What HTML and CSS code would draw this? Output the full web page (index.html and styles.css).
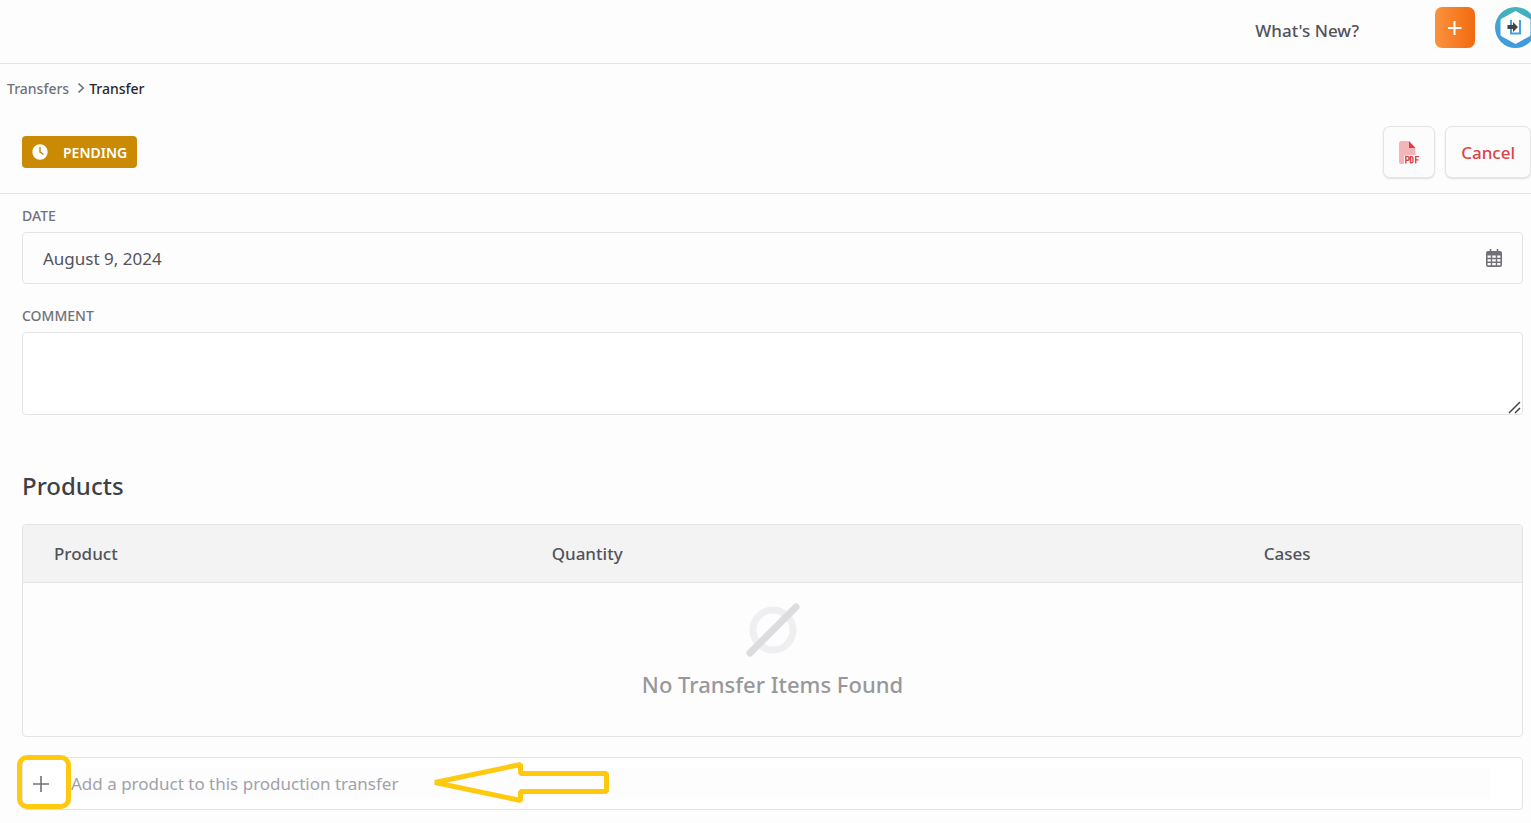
FILE: index.html
```html
<!DOCTYPE html>
<html lang="en">
<head>
  <meta charset="UTF-8" />
  <meta name="viewport" content="width=device-width, initial-scale=1.0" />
  <title>Transfer</title>
  <link rel="stylesheet" href="styles.css">
</head>
<body>
  <header class="topbar">
    <a class="whats-new" href="#">What's New?</a>
    <button class="create" type="button" aria-label="Create">
      <svg width="14" height="14" viewBox="0 0 14 14"><path d="M6.500 0v14M0 7h13.500" stroke="#fff" stroke-width="2" /></svg>
    </button>
    <a class="avatar" href="#" aria-label="Account">
      <svg width="41" height="41" viewBox="0 0 41 41">
        <defs>
          <linearGradient id="ring" x1="0" y1="0" x2="0" y2="1">
            <stop offset="0" stop-color="#42b5b5" />
            <stop offset="0.6" stop-color="#429fd9" />
            <stop offset="1" stop-color="#3f9ae0" />
          </linearGradient>
        </defs>
        <circle cx="20.500" cy="20.500" r="20.500" fill="url(#ring)" />
        <path d="M20.500 4.500l14.500 8v16l-14.500 8-14.500-8v-16z" fill="#fff" stroke="#fff" stroke-linejoin="round" />
        <path d="M16 13v13.500h9V13" fill="none" stroke="#45a3d6" stroke-width="2" />
        <path d="M12.500 18h5.500v-3l5 5-5 5v-3h-5.500z" fill="#444" />
      </svg>
    </a>
  </header>

  <nav class="breadcrumb" aria-label="Breadcrumb">
    <a href="#">Transfers</a>
    <svg width="8" height="12" viewBox="0 0 8 12"><path d="M1.500 1.500L6.200 6l-4.700 4.500" fill="none" stroke="#71717a" stroke-width="1.700" /></svg>
    <span>Transfer</span>
  </nav>

  <div class="toolbar">
    <span class="status">
      <svg width="16" height="16" viewBox="0 0 16 16"><circle cx="8" cy="8" r="7.700" fill="#fff" /><path d="M8 3.500V8l3 2" fill="none" stroke="#ca8a04" stroke-width="1.500" stroke-linecap="round" /></svg>
      PENDING
    </span>
    <div class="actions">
      <button class="btn btn-pdf" type="button" aria-label="Download PDF">
        <svg width="20" height="24" viewBox="0 0 20 24">
          <path d="M2.500 1H10v7h6.500v7H7q-2 0-2 2v7H2.500Q0 24 0 21.500v-18Q0 1 2.500 1z" fill="#f3b5b7" />
          <path d="M10 1l6.500 7H10z" fill="#dc3c42" />
          <path d="M6.800 23.500v-7h1.400a1.900 1.900 0 0 1 0 3.800H6.800M11.500 16.600v6.200h.9q1.600 0 1.600-1.600v-3q0-1.600-1.600-1.600zM16.700 23.500v-6.900h3.300M16.700 19.900h2.800" fill="none" stroke="#dc4248" stroke-width="1.400" />
        </svg>
      </button>
      <button class="btn" type="button">Cancel</button>
    </div>
  </div>

  <main class="content">
    <form class="details">
      <label for="date">DATE</label>
      <div class="date-field">
        <input id="date" type="text" value="August 9, 2024" />
        <svg width="16" height="18" viewBox="0 0 16 18">
          <path d="M4.500 0v3M11.500 0v3" stroke="#71717a" stroke-width="1.600" />
          <rect y="2" width="16" height="16" rx="2" fill="#71717a" />
          <path d="M1.600 6.500h3.200v2.200H1.600zM6.200 6.500h3.600v2.200H6.200zM11.200 6.500h3.200v2.200h-3.200zM1.600 10.200h3.200v2.300H1.600zM6.200 10.200h3.600v2.300H6.200zM11.200 10.200h3.200v2.300h-3.200zM1.600 14h3.200v2.300H1.600zM6.200 14h3.600v2.300H6.200zM11.200 14h3.200v2.300h-3.200z" fill="#fff" />
        </svg>
      </div>
      <label for="comment">COMMENT</label>
      <div class="comment-field">
        <textarea id="comment"></textarea>
        <svg class="grip" width="13" height="13" viewBox="0 0 13 13"><path d="M1 12L12 1M7 12l5-5" stroke="#444" stroke-width="1.500" /></svg>
      </div>
    </form>

    <h2>Products</h2>
    <div class="table-wrap">
      <table>
        <thead>
          <tr>
            <th class="col-product">Product</th>
            <th class="col-quantity">Quantity</th>
            <th class="col-cases">Cases</th>
          </tr>
        </thead>
        <tbody>
          <tr>
            <td class="empty" colspan="3">
              <svg width="54" height="54" viewBox="0 0 54 54">
                <circle cx="27" cy="27" r="20" fill="none" stroke="#efeff1" stroke-width="7" />
                <path d="M4 50L50 4" stroke="#dcdcde" stroke-width="7" stroke-linecap="round" />
              </svg>
              <p>No Transfer Items Found</p>
            </td>
          </tr>
        </tbody>
      </table>
    </div>

    <div class="add-row">
      <button class="add" type="button" aria-label="Add product">
        <svg width="16" height="16" viewBox="0 0 16 16"><path d="M8 0v16M0 8h16" stroke="#71717a" stroke-width="1.600" /></svg>
      </button>
      <input type="text" aria-label="Product" placeholder="Add a product to this production transfer" />
      <span class="highlight"></span>
      <svg class="arrow" width="178" height="42" viewBox="0 0 178 42">
        <path d="M3 20.500L88.500 2.500V11.500H174.500V29.500H88.500V38.500z" fill="none" stroke="#ffc90e" stroke-width="5" stroke-linejoin="bevel" />
      </svg>
    </div>
  </main>
</body>
</html>
```
FILE: styles.css
```css
* {
  box-sizing: border-box;
  margin: 0;
  padding: 0;
}

body {
  font-family: "Noto Sans", "Open Sans", sans-serif;
  font-size: 17px;
  background: #fdfdfd;
  color: #52525b;
  overflow-x: hidden;
}

button,
input,
textarea {
  font: inherit;
  color: inherit;
}

button {
  cursor: pointer;
}

a {
  color: inherit;
  text-decoration: none;
}

svg {
  display: block;
  flex-shrink: 0;
}

.topbar {
  display: flex;
  justify-content: flex-end;
  height: 64px;
  padding-top: 7px;
  border-bottom: 1px solid #e4e4e7;
  overflow: hidden;
}

.whats-new {
  margin-right: 76px;
  line-height: 48px;
  font-weight: 500;
}

.create {
  display: flex;
  align-items: center;
  justify-content: center;
  width: 40px;
  height: 41px;
  margin-right: 20px;
  border: none;
  border-radius: 7px;
  background: linear-gradient(to right, #fb923c, #f16a10);
}

.avatar {
  margin-right: -5px;
}

.breadcrumb {
  display: flex;
  align-items: center;
  height: 48px;
  padding-left: 7px;
  font-size: 14px;
  font-weight: 500;
  color: #71717a;
}

.breadcrumb svg {
  margin: 0 4px 0 8px;
}

.breadcrumb span {
  color: #27272a;
}

.toolbar {
  display: flex;
  align-items: center;
  justify-content: space-between;
  height: 82px;
  padding: 0 0 1px 22px;
  border-bottom: 1px solid #e4e4e7;
}

.status {
  display: flex;
  align-items: center;
  gap: 15px;
  height: 32px;
  padding: 0 10px;
  border-radius: 4px;
  background: #ca8a04;
  color: #fff;
  font-size: 14px;
  font-weight: 600;
}

.actions {
  display: flex;
  gap: 10px;
}

.btn {
  height: 52px;
  padding: 0 15px;
  border: 1px solid #e4e4e7;
  border-radius: 7px;
  background: #fcfcfc;
  box-shadow: 0 1px 2px rgba(0, 0, 0, 0.12);
  color: #dc4348;
  font-weight: 500;
}

.content {
  padding: 12px 8px 14px 22px;
}

.details label {
  display: block;
  line-height: 20px;
  font-size: 14px;
  font-weight: 500;
  color: #71717a;
}

.date-field {
  display: flex;
  align-items: center;
  height: 52px;
  margin: 6px 0 22px;
  padding: 0 20px;
  border: 1px solid #e4e4e7;
  border-radius: 4px;
}

.date-field input {
  flex: 1;
  height: 50px;
  border: none;
  background: none;
}

.comment-field {
  position: relative;
  margin-top: 6px;
}

textarea {
  display: block;
  width: 100%;
  height: 83px;
  padding: 12px 20px;
  border: 1px solid #e4e4e7;
  border-radius: 4px;
  background: #fff;
  resize: vertical;
}

textarea::-webkit-resizer {
  background: none;
}

.grip {
  position: absolute;
  right: 2px;
  bottom: 1px;
  pointer-events: none;
}

h2 {
  margin: 53px 0 21px;
  line-height: 35px;
  font-size: 24px;
  font-weight: 500;
  color: #3f3f46;
}

.table-wrap {
  border: 1px solid #e4e4e7;
  border-radius: 4px;
  overflow: hidden;
}

table {
  width: 100%;
  border-collapse: collapse;
  table-layout: fixed;
}

th {
  height: 57px;
  padding-left: 31px;
  border-bottom: 1px solid #e4e4e7;
  background: #f3f3f3;
  text-align: left;
  font-weight: 500;
}

.col-product {
  width: 33.2%;
}

.col-quantity {
  width: 47.5%;
}

.empty {
  height: 154px;
  padding-top: 20px;
  vertical-align: top;
  text-align: center;
  font-size: 22px;
  font-weight: 500;
  color: #98989b;
}

.empty svg {
  margin: 0 auto 10px;
}

.empty p {
  line-height: 35px;
}

.add-row {
  position: relative;
  display: flex;
  align-items: center;
  height: 53px;
  margin-top: 20px;
  padding-right: 31px;
  border: 1px solid #e4e4e7;
  border-radius: 4px;
  background: #fff;
}

.add {
  padding: 16px 22px 16px 10px;
  border: none;
  background: none;
}

.add-row input {
  flex: 1;
  height: 31px;
  border: none;
  border-radius: 4px;
  background: #fdfdfd;
}

.add-row input::placeholder {
  color: #a1a1aa;
}

/* callout marks drawn over the row */
.highlight {
  position: absolute;
  left: -6px;
  top: -3px;
  width: 54px;
  height: 54px;
  border: 5px solid #ffc90e;
  border-radius: 10px;
  pointer-events: none;
}

.arrow {
  position: absolute;
  left: 409px;
  top: 4px;
  pointer-events: none;
}
```
